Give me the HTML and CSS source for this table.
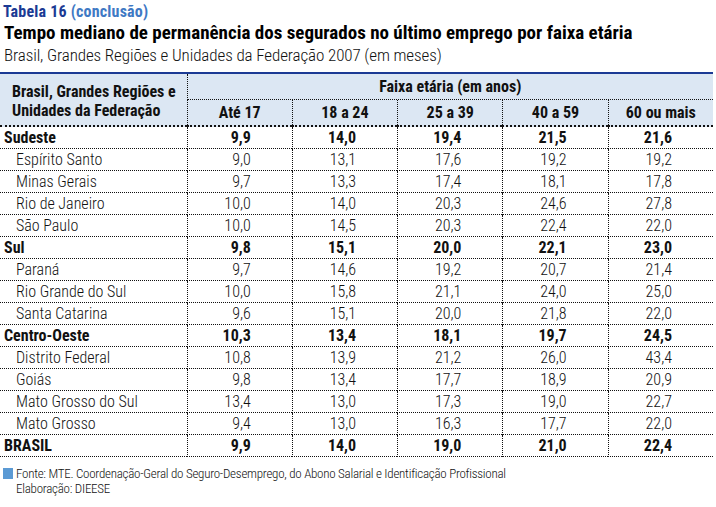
FILE: index.html
```html
<!DOCTYPE html>
<html lang="pt">
<head>
<meta charset="utf-8">
<title>Tabela 16</title>
<link rel="stylesheet" href="styles.css">
</head>
<body>
<div class="page">
  <div class="label"><span class="num">Tabela 16</span> <span class="cont">(conclusão)</span></div>
  <h1 class="title">Tempo mediano de permanência dos segurados no último emprego por faixa etária</h1>
  <div class="subtitle">Brasil, Grandes Regiões e Unidades da Federação 2007 (em meses)</div>
  <table class="data">
    <colgroup>
      <col class="c-name"><col class="c-val"><col class="c-val"><col class="c-val"><col class="c-val"><col class="c-val">
    </colgroup>
    <thead>
      <tr class="h1">
        <th class="hname" rowspan="2">Brasil, Grandes Regiões e<br>Unidades da Federação</th>
        <th class="hgroup" colspan="5">Faixa etária (em anos)</th>
      </tr>
      <tr class="h2">
        <th>Até 17</th><th>18 a 24</th><th>25 a 39</th><th>40 a 59</th><th>60 ou mais</th>
      </tr>
    </thead>
    <tbody>
      <tr class="reg"><td>Sudeste</td><td>9,9</td><td>14,0</td><td>19,4</td><td>21,5</td><td>21,6</td></tr>
      <tr class="uf"><td>Espírito Santo</td><td>9,0</td><td>13,1</td><td>17,6</td><td>19,2</td><td>19,2</td></tr>
      <tr class="uf"><td>Minas Gerais</td><td>9,7</td><td>13,3</td><td>17,4</td><td>18,1</td><td>17,8</td></tr>
      <tr class="uf"><td>Rio de Janeiro</td><td>10,0</td><td>14,0</td><td>20,3</td><td>24,6</td><td>27,8</td></tr>
      <tr class="uf"><td>São Paulo</td><td>10,0</td><td>14,5</td><td>20,3</td><td>22,4</td><td>22,0</td></tr>
      <tr class="reg"><td>Sul</td><td>9,8</td><td>15,1</td><td>20,0</td><td>22,1</td><td>23,0</td></tr>
      <tr class="uf"><td>Paraná</td><td>9,7</td><td>14,6</td><td>19,2</td><td>20,7</td><td>21,4</td></tr>
      <tr class="uf"><td>Rio Grande do Sul</td><td>10,0</td><td>15,8</td><td>21,1</td><td>24,0</td><td>25,0</td></tr>
      <tr class="uf"><td>Santa Catarina</td><td>9,6</td><td>15,1</td><td>20,0</td><td>21,8</td><td>22,0</td></tr>
      <tr class="reg"><td>Centro-Oeste</td><td>10,3</td><td>13,4</td><td>18,1</td><td>19,7</td><td>24,5</td></tr>
      <tr class="uf"><td>Distrito Federal</td><td>10,8</td><td>13,9</td><td>21,2</td><td>26,0</td><td>43,4</td></tr>
      <tr class="uf"><td>Goiás</td><td>9,8</td><td>13,4</td><td>17,7</td><td>18,9</td><td>20,9</td></tr>
      <tr class="uf"><td>Mato Grosso do Sul</td><td>13,4</td><td>13,0</td><td>17,3</td><td>19,0</td><td>22,7</td></tr>
      <tr class="uf"><td>Mato Grosso</td><td>9,4</td><td>13,0</td><td>16,3</td><td>17,7</td><td>22,0</td></tr>
      <tr class="reg"><td>BRASIL</td><td>9,9</td><td>14,0</td><td>19,0</td><td>21,0</td><td>22,4</td></tr>
    </tbody>
  </table>
  <div class="notes">
    <span class="mark"></span>
    <div class="note-text">
      <div>Fonte: MTE. Coordenação-Geral do Seguro-Desemprego, do Abono Salarial e Identificação Profissional</div>
      <div>Elaboração: DIEESE</div>
    </div>
  </div>
</div>
</body>
</html>
```

FILE: styles.css
```css
html, body {
  margin: 0;
  padding: 0;
  background: #ffffff;
}
body {
  font-family: "Roboto", "Roboto Condensed", "Open Sans", sans-serif;
  font-stretch: 75%;
  color: #111111;
}
.page {
  width: 716px;
  padding-top: 2px;
}
.label {
  font-size: 16px;
  font-weight: 700;
  line-height: 20px;
  padding-left: 3px;
  letter-spacing: 0.2px;
}
.label .num { color: #1b3a94; }
.label .cont { color: #3f79c4; }
.title {
  margin: 0;
  font-size: 19px;
  font-weight: 700;
  line-height: 22px;
  padding-left: 4px;
  color: #000;
}
.subtitle {
  font-size: 17px;
  font-weight: 300;
  line-height: 22px;
  padding-left: 4px;
  color: #111;
  margin-bottom: 6px;
  letter-spacing: -0.1px;
}
.data {
  width: 713px;
  border-collapse: separate;
  border-spacing: 0;
  border-top: 2px solid #1b3a94;
  table-layout: fixed;
  font-size: 16px;
}
.c-name { width: 186px; }
.c-val { width: 105px; }
thead th {
  background: #dce7f3;
  font-weight: 700;
  color: #111;
  padding: 0;
}
.hname {
  text-align: left;
  padding: 2px 0 0 12px !important;
  line-height: 19px;
  vertical-align: middle;
  border-bottom: 2px dotted #111;
}
.hgroup {
  height: 25px;
  border-left: 1px dotted #111;
  border-bottom: 1px dotted #111;
  text-align: center;
}
.h2 th {
  height: 25px;
  border-left: 1px dotted #111;
  border-bottom: 2px dotted #111;
  text-align: center;
}
tbody td {
  height: 21px;
  padding: 0 41px 0 0;
  border-bottom: 1px dotted #111;
  border-left: 1px dotted #111;
  text-align: right;
  line-height: 21px;
  white-space: nowrap;
}
tbody td:first-child {
  border-left: none;
  text-align: left;
  padding: 0 0 0 4px;
}
.reg td { font-weight: 700; }
.uf td { font-weight: 300; color: #111; }
.uf td:first-child { padding-left: 16px; }
.notes {
  display: flex;
  align-items: flex-start;
  gap: 3px;
  padding: 9px 0 0 3px;
  font-size: 13px;
  font-weight: 300;
  line-height: 15px;
  letter-spacing: -0.25px;
  color: #111;
}
.mark {
  width: 10px;
  height: 11px;
  margin-top: 2px;
  background: #5b9ad4;
  flex: none;
}
```
